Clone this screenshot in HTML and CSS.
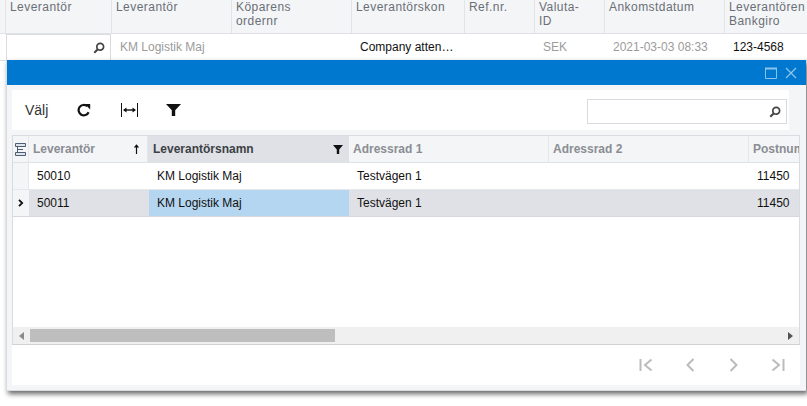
FILE: index.html
```html
<!DOCTYPE html>
<html lang="sv">
<head>
<meta charset="utf-8">
<title>Leverantör</title>
<link rel="stylesheet" href="styles.css">
</head>
<body>
<div class="page">
  <div class="bg-head">
    <div class="bh h0"></div>
    <div class="bh h1">Leverantör</div>
    <div class="bh c2">Leverantör</div>
    <div class="bh c3">Köparens<br>ordernr</div>
    <div class="bh c4">Leverantörskon</div>
    <div class="bh c5">Ref.nr.</div>
    <div class="bh c6">Valuta-<br>ID</div>
    <div class="bh c7">Ankomstdatum</div>
    <div class="bh c8">Leverantören<br>Bankgiro</div>
  </div>
  <div class="bg-row">
    <div class="bc c0"></div>
    <div class="bc c1 lookup">
      <svg class="search" viewBox="0 0 12 12"><circle cx="7.2" cy="4.8" r="3.4" fill="none" stroke="#444" stroke-width="1.7"/><path d="M4.8 7.2 1.3 10.7" stroke="#444" stroke-width="2"/></svg>
    </div>
    <div class="bc c2 muted">KM Logistik Maj</div>
    <div class="bc c3"></div>
    <div class="bc c4">Company atten…</div>
    <div class="bc c5"></div>
    <div class="bc c6 muted">SEK</div>
    <div class="bc c7 muted">2021-03-03 08:33</div>
    <div class="bc c8">123-4568</div>
  </div>
</div>

<div class="dialog">
  <div class="titlebar">
    <svg class="tb-icon" viewBox="0 0 12 12"><path d="M.5 1.500h11v10H.5z" fill="none" stroke="#8cc4ec"/><path d="M0 1.500h12" stroke="#8cc4ec" stroke-width="2"/></svg>
    <svg class="tb-icon" viewBox="0 0 12 12"><path d="M1 1l10 10M11 1 1 11" stroke="#8cc4ec" stroke-width="1.300" fill="none"/></svg>
  </div>
  <div class="body">
    <div class="toolbar">
      <span class="valj">Välj</span>
      <svg class="t-refresh" viewBox="0 0 14 14"><path d="M11.600 9.200A5.200 5.200 0 1 1 10.200 3.200" fill="none" stroke="#111" stroke-width="2.200"/><path d="M7.800 1h5.400v5.400z" fill="#111"/></svg>
      <svg class="t-fit" viewBox="0 0 17 14"><path d="M.5 0v14M16.500 0v14" stroke="#111"/><path d="M3 7h11" stroke="#111" stroke-width="1.400"/><path d="M2 7l3.500-2.500v5zM15 7l-3.500-2.500v5z" fill="#111"/></svg>
      <svg class="t-filter" viewBox="0 0 15 12"><path d="M0 0h15L9.200 6.200V12H5.800V6.200z" fill="#111"/></svg>
      <div class="searchbox">
        <svg class="search" viewBox="0 0 12 12"><circle cx="7.2" cy="4.8" r="3.4" fill="none" stroke="#444" stroke-width="1.7"/><path d="M4.8 7.2 1.3 10.7" stroke="#444" stroke-width="2"/></svg>
      </div>
    </div>
    <div class="grid">
      <div class="g-head">
        <div class="gh d0">
          <svg class="cols" viewBox="0 0 11 13"><path d="M.5.5h10v3h-10zM.5 9.500h10v3h-10z" fill="#dfe3ea" stroke="#4d5d73"/><path d="M2.500 3.500v6h6M3 6.500h5" fill="none" stroke="#4d5d73"/></svg>
        </div>
        <div class="gh d1"><span>Leverantör</span><svg class="arrow" viewBox="0 0 7 10"><path d="M3.500 1v9" stroke="#111" stroke-width="1.200"/><path d="M.8 3.600 3.500.2l2.700 3.400z" fill="#111"/></svg></div>
        <div class="gh d2 active"><span>Leverantörsnamn</span><svg class="hfilter" viewBox="0 0 10 9"><path d="M0 0h10L6.200 4.500V9H3.800V4.500z" fill="#111"/></svg></div>
        <div class="gh d3">Adressrad 1</div>
        <div class="gh d4">Adressrad 2</div>
        <div class="gh d5">Postnum</div>
      </div>
      <div class="g-row">
        <div class="gc d0"></div>
        <div class="gc e1">50010</div>
        <div class="gc e2">KM Logistik Maj</div>
        <div class="gc d3">Testvägen 1</div>
        <div class="gc d4"></div>
        <div class="gc d5">11450</div>
      </div>
      <div class="g-row selected">
        <div class="gc d0"><svg class="chev" viewBox="0 0 6 8"><path d="M1 .8 4.200 4 1 7.200" fill="none" stroke="#111" stroke-width="1.800"/></svg></div>
        <div class="gc e1">50011</div>
        <div class="gc e2 cur">KM Logistik Maj</div>
        <div class="gc d3">Testvägen 1</div>
        <div class="gc d4"></div>
        <div class="gc d5">11450</div>
      </div>
      <div class="g-fill"></div>
      <div class="hscroll">
        <svg class="sarrow" viewBox="0 0 5 8"><path d="M5 0v8L0 4z" fill="#8a8a8a"/></svg>
        <div class="strack"><div class="sthumb"></div></div>
        <svg class="sarrow" viewBox="0 0 5 8"><path d="M0 0v8l5-4z" fill="#555"/></svg>
      </div>
    </div>
    <div class="pager">
      <svg class="pg" viewBox="0 0 14 14"><path d="M1.500 1v12" stroke="#bbb" stroke-width="2"/><path d="M12.500 1.500 6 7l6.500 5.500" fill="none" stroke="#bbb" stroke-width="2"/></svg>
      <svg class="pg" viewBox="0 0 14 14"><path d="M10.500 1 4.500 7l6 6" fill="none" stroke="#bbb" stroke-width="2"/></svg>
      <svg class="pg" viewBox="0 0 14 14"><path d="M3.500 1l6 6-6 6" fill="none" stroke="#bbb" stroke-width="2"/></svg>
      <svg class="pg" viewBox="0 0 14 14"><path d="M12.500 1v12" stroke="#bbb" stroke-width="2"/><path d="M1.500 1.500 8 7l-6.500 5.500" fill="none" stroke="#bbb" stroke-width="2"/></svg>
    </div>
  </div>
</div>
</body>
</html>
```

FILE: styles.css
```css
* { box-sizing: border-box; }
html, body { margin: 0; height: 100%; overflow: hidden; background: #fff; }
body { position: relative; width: 807px; height: 406px; font: 12px/14px "Liberation Sans", Arial, sans-serif; color: #111; }

.page { width: 807px; }
.bg-head, .bg-row { display: flex; }
.bg-head { height: 34px; background: #f4f5f7; border-bottom: 1px solid #dfe1e5; }
.bg-row { height: 27px; border-bottom: 1px solid #dfe1e5; }
.bh { flex: none; padding: 0 0 0 4px; border-left: 1px solid #e2e4e8; color: #6a6f76; letter-spacing: .45px; height: 33px; white-space: nowrap; overflow: hidden; }
.h0 { width: 5px; padding: 0; border-left: 0; }
.h1 { width: 106px; }
.bc { padding: 6px 0 0 6px; white-space: nowrap; overflow: hidden; }
.muted { color: #9b9b9b; }
.c0 { width: 6px; padding: 0; }
.c1 { width: 105px; }
.c2 { width: 120px; }
.c3 { width: 120px; }
.c4 { width: 113px; }
.c5 { width: 70px; }
.c6 { width: 70px; }
.c7 { width: 120px; }
.c8 { width: 83px; }
.lookup { border: 1px solid #dadce0; height: 27px; display: flex; justify-content: flex-end; align-items: center; padding: 0 5px 0 0; }
.bg-row .c2, .bg-row .c3, .bg-row .c4, .bg-row .c5, .bg-row .c6, .bg-row .c7, .bg-row .c8 { padding-left: 9px; }
.search { width: 12px; height: 12px; display: block; }

.dialog { position: absolute; left: 6px; top: 60px; width: 800px; height: 331px; background: #f4f5f7; border: solid #d9dbe0; border-width: 0 0 1px 1px; box-shadow: 2px 3px 5px rgba(0,0,0,.6); display: flex; flex-direction: column; }
.titlebar { height: 25px; flex: none; background: #0078cf; display: flex; justify-content: flex-end; align-items: center; gap: 8px; padding: 0 9px 0 0; }
.tb-icon { width: 12px; height: 12px; display: block; }
.body { flex: 1; min-height: 0; margin: 5px 6px 5px 5px; display: flex; flex-direction: column; }
.toolbar { flex: none; height: 40px; margin-right: 11px; background: #fff; display: flex; align-items: center; padding: 0 2px 0 13px; }
.valj { font-size: 14px; color: #333; width: 52px; }
.t-refresh { width: 14px; height: 14px; margin-right: 30px; }
.t-fit { width: 17px; height: 14px; margin-right: 28px; }
.t-filter { width: 15px; height: 12px; }
.searchbox { margin: 3px 0 0 auto; width: 200px; height: 25px; border: 1px solid #d9dbe0; display: flex; align-items: center; justify-content: flex-end; padding-right: 5px; }

.grid { margin-top: 5px; flex: 1; min-height: 0; background: #fff; border: 1px solid #d9dbe0; border-bottom-color: #cfd1d5; display: flex; flex-direction: column; overflow: hidden; }
.g-head, .g-row { display: flex; flex: none; }
.g-head { height: 27px; background: #f4f5f7; border-bottom: 1px solid #dfe1e5; color: #8a8d93; font-weight: 700; }
.g-row { height: 27px; border-bottom: 1px solid #e6e7ea; }
.selected { background: #dfe1e6; border-bottom-color: #d5d7dc; }
.gh, .gc { flex: none; white-space: nowrap; overflow: hidden; }
.gh { display: flex; align-items: center; padding-left: 4px; border-right: 1px solid #e6e7ea; }
.gc { padding: 6px 0 0 8px; }
.d0 { width: 16px; padding: 0; display: flex; align-items: center; justify-content: center; background: #f4f5f7; border-right: 1px solid #e6e7ea; }
.d1 { width: 119px; justify-content: space-between; padding-right: 7px; }
.d2 { width: 201px; justify-content: space-between; padding-right: 6px; }
.e1 { width: 120px; }
.e2 { width: 200px; }
.d3 { width: 200px; }
.d4 { width: 200px; }
.d5 { width: 60px; border-right: 0; }
.selected .d0 { background: #f4f5f7; border-right: 0; }
.active { background: #dfe1e6; color: #3c3f44; border-right: 0; padding-left: 5px; }
.cur { background: #b5d6f0; }
.cols { width: 11px; height: 13px; }
.arrow { width: 7px; height: 10px; }
.hfilter { width: 10px; height: 9px; }
.chev { width: 6px; height: 8px; }
.g-fill { flex: 1; }
.hscroll { flex: none; height: 17px; background: #f0f0f0; display: flex; align-items: center; padding: 0 6px; gap: 6px; }
.strack { flex: 1; height: 13px; }
.sthumb { width: 305px; height: 13px; background: #bebebe; }
.sarrow { width: 5px; height: 8px; flex: none; }
.pager { flex: none; height: 40px; background: #fff; display: flex; justify-content: flex-end; align-items: center; gap: 30px; padding-right: 15px; }
.pg { width: 14px; height: 14px; }
```
